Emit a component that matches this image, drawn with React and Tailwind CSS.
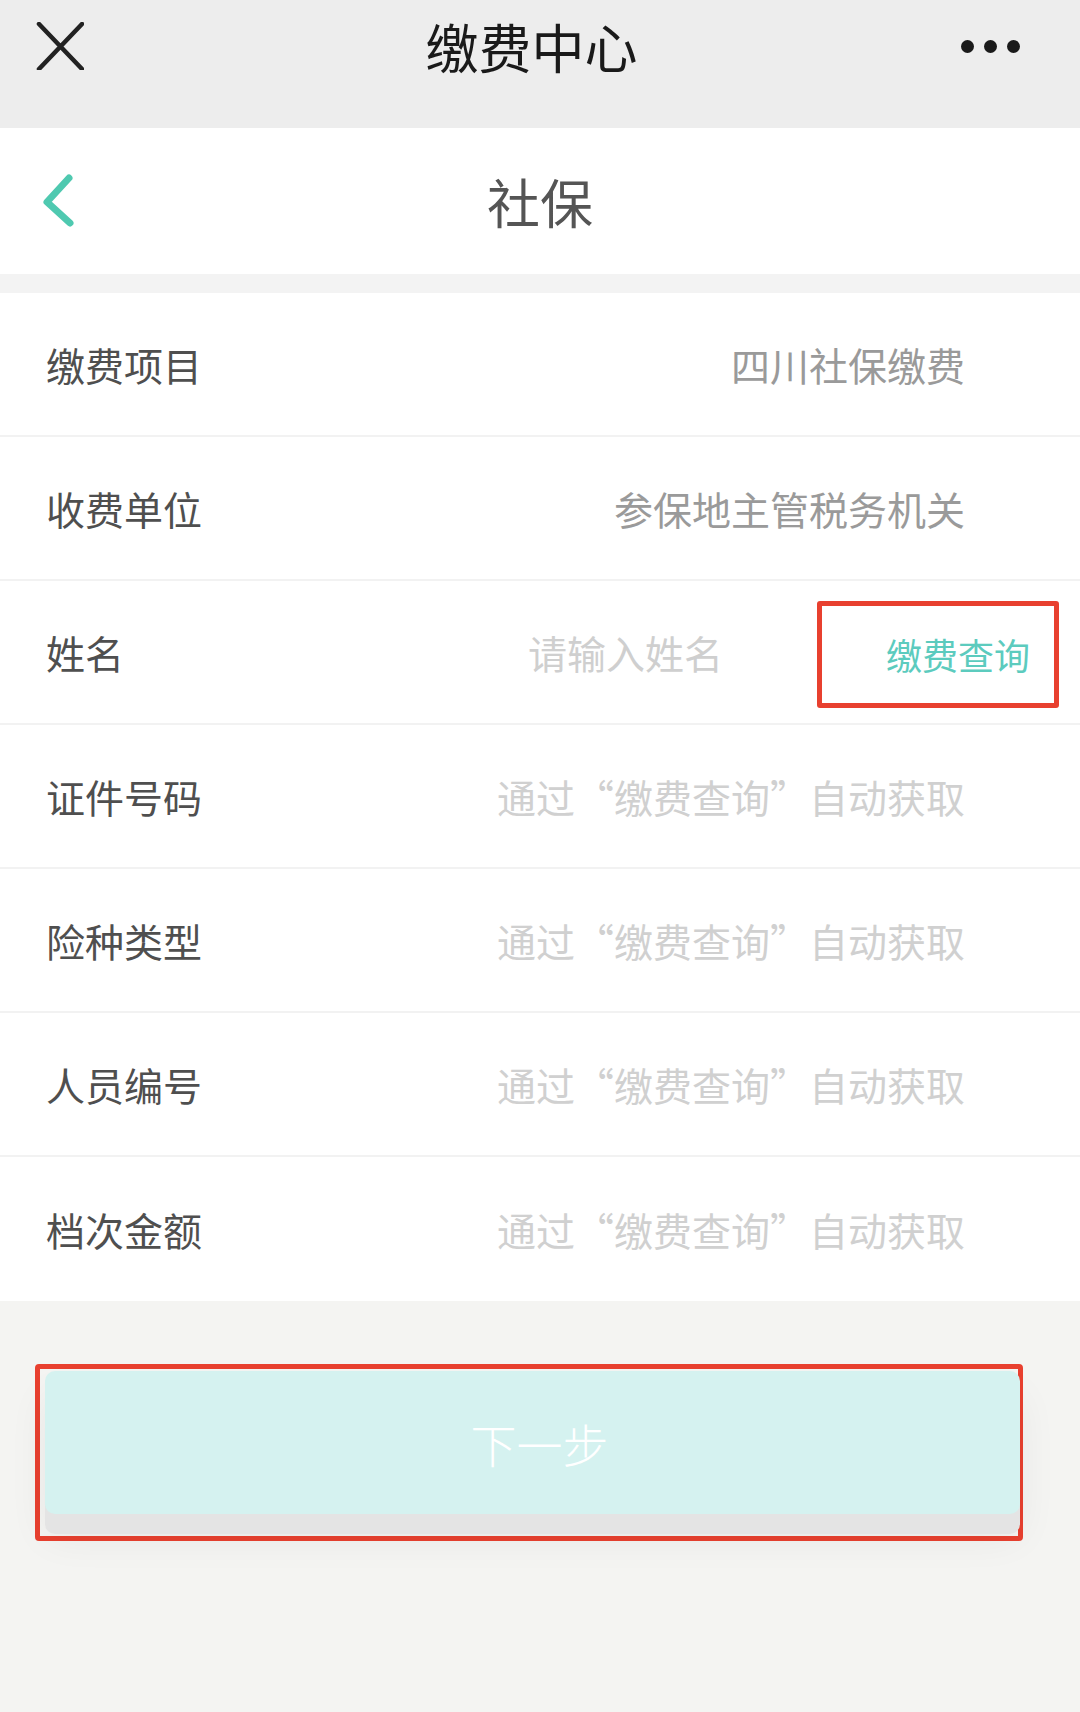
const rows = [
  { label: "缴费项目", value: "四川社保缴费", muted: false },
  { label: "收费单位", value: "参保地主管税务机关", muted: false },
  { label: "姓名", query: true },
  { label: "证件号码", value: "通过“缴费查询”自动获取", muted: true },
  { label: "险种类型", value: "通过“缴费查询”自动获取", muted: true },
  { label: "人员编号", value: "通过“缴费查询”自动获取", muted: true },
  { label: "档次金额", value: "通过“缴费查询”自动获取", muted: true },
];

function CloseIcon() {
  return (
    <svg width="48" height="48" viewBox="0 0 48 48" fill="none">
      <path d="M3 2 L46 47 M46 2 L3 47" stroke="#222" strokeWidth="4.5" strokeLinecap="round" />
    </svg>
  );
}

function BackIcon() {
  return (
    <svg width="36" height="58" viewBox="0 0 36 58" fill="none">
      <path d="M29 6 L7 30 L30 51" stroke="#4fc9b0" strokeWidth="7" strokeLinecap="round" strokeLinejoin="round" />
    </svg>
  );
}

function FormRow({ row, last }) {
  return (
    <div className={`flex h-[144px] items-center bg-white ${last ? "" : "border-b-2 border-[#f2f2f2]"}`}>
      <span className="pl-[46px] text-[39px] leading-none text-[#4f4f4f]">{row.label}</span>
      {row.query ? (
        <>
          <span className="flex-1 text-right text-[39px] leading-none text-[#cfcfcf]">请输入姓名</span>
          <div className="ml-[94px] mr-[21px] mt-[4px] flex h-[107px] w-[242px] items-center justify-end rounded-[3px] border-[5px] border-[#e8402f] pr-[24px]">
            <span className="text-[36px] leading-none text-[#5ccbbe]">缴费查询</span>
          </div>
        </>
      ) : (
        <span
          className={`flex-1 pr-[115px] text-right text-[39px] leading-none ${row.muted ? "text-[#d0d0d0]" : "text-[#9a9a9a]"}`}
        >
          {row.value}
        </span>
      )}
    </div>
  );
}

export default function App() {
  return (
    <div className="flex h-[1712px] w-[1080px] flex-col bg-[#f4f4f2] font-['Noto_Sans_CJK_SC','Noto_Sans',sans-serif]">
      {/* top bar */}
      <div className="flex h-[128px] items-center bg-[#ededed] pb-[36px] pl-[36px] pr-[59px]">
        <CloseIcon />
        <div className="flex-1 pl-[18px] text-center text-[53px] leading-none text-[#1a1a1a]">缴费中心</div>
        <div className="flex w-[60px] items-center gap-[10px]">
          <span className="h-[13px] w-[13px] rounded-full bg-[#1a1a1a]" />
          <span className="h-[13px] w-[13px] rounded-full bg-[#1a1a1a]" />
          <span className="h-[13px] w-[13px] rounded-full bg-[#1a1a1a]" />
        </div>
      </div>

      {/* page header */}
      <div className="grid h-[146px] grid-cols-[1fr_auto_1fr] items-center bg-white">
        <div className="pl-[40px]">
          <BackIcon />
        </div>
        <div className="text-[53px] leading-none text-[#555]">社保</div>
        <div />
      </div>

      <div className="h-[19px] bg-[#f3f3f3]" />

      <div className="flex flex-col">
        {rows.map((row, i) => (
          <FormRow key={row.label} row={row} last={i === rows.length - 1} />
        ))}
      </div>

      {/* next step */}
      <div className="ml-[35px] mt-[63px] h-[177px] w-[988px] rounded-[4px] border-[5px] border-[#e8402f] pl-[5px] pt-[2px]">
        <button
          type="button"
          className="flex h-[143px] w-[975px] items-center justify-center rounded-[10px] bg-[#d5f2f0] pl-[14px] text-[46px] font-light leading-none text-white shadow-[0_20px_0_#e4e4e4,0_24px_40px_rgba(0,0,0,0.06)]"
        >
          下一步
        </button>
      </div>
    </div>
  );
}
